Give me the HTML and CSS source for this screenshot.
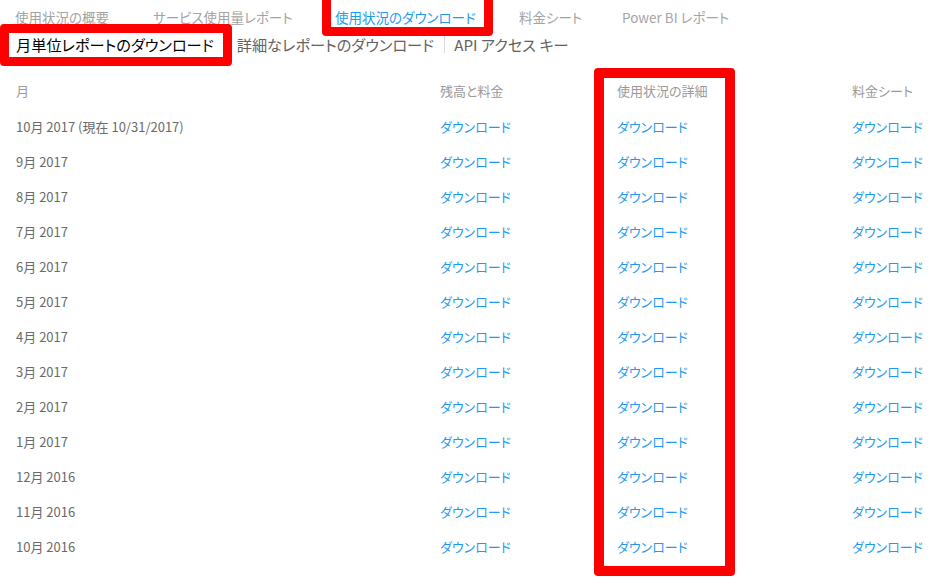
FILE: index.html
```html
<!DOCTYPE html>
<html lang="ja">
<head>
<meta charset="utf-8">
<title>使用状況のダウンロード</title>
<link rel="stylesheet" href="styles.css">
</head>
<body>
<div class="page">
  <nav class="tabs">
    <span class="tab">使用状況の概要</span>
    <span class="tab">サービス使用量レポート</span>
    <span class="tab active">使用状況のダウンロード</span>
    <span class="tab">料金シート</span>
    <span class="tab">Power BI レポート</span>
  </nav>
  <nav class="subtabs">
    <span class="subtab current">月単位レポートのダウンロード</span>
    <span class="subtab">詳細なレポートのダウンロード</span>
    <span class="sep"></span>
    <span class="subtab">API アクセス キー</span>
  </nav>
  <div class="table">
    <div class="row head">
      <span>月</span><span>残高と料金</span><span>使用状況の詳細</span><span>料金シート</span>
    </div>
    <div class="row"><span class="month">10月 2017 (現在 10/31/2017)</span><a>ダウンロード</a><a>ダウンロード</a><a>ダウンロード</a></div>
    <div class="row"><span class="month">9月 2017</span><a>ダウンロード</a><a>ダウンロード</a><a>ダウンロード</a></div>
    <div class="row"><span class="month">8月 2017</span><a>ダウンロード</a><a>ダウンロード</a><a>ダウンロード</a></div>
    <div class="row"><span class="month">7月 2017</span><a>ダウンロード</a><a>ダウンロード</a><a>ダウンロード</a></div>
    <div class="row"><span class="month">6月 2017</span><a>ダウンロード</a><a>ダウンロード</a><a>ダウンロード</a></div>
    <div class="row"><span class="month">5月 2017</span><a>ダウンロード</a><a>ダウンロード</a><a>ダウンロード</a></div>
    <div class="row"><span class="month">4月 2017</span><a>ダウンロード</a><a>ダウンロード</a><a>ダウンロード</a></div>
    <div class="row"><span class="month">3月 2017</span><a>ダウンロード</a><a>ダウンロード</a><a>ダウンロード</a></div>
    <div class="row"><span class="month">2月 2017</span><a>ダウンロード</a><a>ダウンロード</a><a>ダウンロード</a></div>
    <div class="row"><span class="month">1月 2017</span><a>ダウンロード</a><a>ダウンロード</a><a>ダウンロード</a></div>
    <div class="row"><span class="month">12月 2016</span><a>ダウンロード</a><a>ダウンロード</a><a>ダウンロード</a></div>
    <div class="row"><span class="month">11月 2016</span><a>ダウンロード</a><a>ダウンロード</a><a>ダウンロード</a></div>
    <div class="row"><span class="month">10月 2016</span><a>ダウンロード</a><a>ダウンロード</a><a>ダウンロード</a></div>
  </div>
  <div class="mark mark-tab"></div>
  <div class="mark mark-sub"></div>
  <div class="mark mark-col"></div>
</div>
</body>
</html>
```

FILE: styles.css
```css
html, body {
  margin: 0;
  padding: 0;
  background: #ffffff;
}
body {
  font-family: "Noto Sans CJK JP", "Noto Sans", sans-serif;
  font-feature-settings: "palt";
  overflow: hidden;
}
.page {
  position: relative;
  width: 930px;
  height: 580px;
}
.tabs {
  display: grid;
  grid-template-columns: 138px 182px 184px 103px auto;
  padding: 7px 0 0 15px;
  height: 21px;
  font-size: 13.5px;
  line-height: 20px;
  color: #a3a3a3;
}
.tab {
  white-space: nowrap;
}
.tab.active {
  color: #1e9bf0;
}
.subtabs {
  display: flex;
  align-items: center;
  padding: 2px 0 0 16px;
  height: 28px;
  font-size: 15.2px;
  line-height: 28px;
  color: #626262;
}
.subtab {
  white-space: nowrap;
}
.subtab.current {
  color: #000000;
  margin-right: 23px;
}
.sep {
  width: 1px;
  height: 17px;
  background: #d8d8d8;
  margin: 0 9px 0 10px;
}
.table {
  padding: 14px 0 0 16px;
}
.row {
  display: grid;
  grid-template-columns: 424px 177px 235px auto;
  height: 35px;
  align-items: center;
  font-size: 13px;
  line-height: 20px;
  white-space: nowrap;
}
.row.head {
  height: 37px;
  color: #9a9a9a;
}
.month {
  color: #6a6a6a;
}
.row a {
  color: #1e9bf0;
  cursor: pointer;
}
.mark {
  position: absolute;
  border: 9px solid #ff0000;
  border-radius: 4px;
  pointer-events: none;
}
.mark-tab {
  left: 322px;
  top: -12px;
  width: 153px;
  height: 30px;
}
.mark-sub {
  left: 0;
  top: 24px;
  width: 214px;
  height: 24px;
}
.mark-col {
  left: 594px;
  top: 68px;
  width: 121px;
  height: 488px;
  border-width: 10px;
}
```
